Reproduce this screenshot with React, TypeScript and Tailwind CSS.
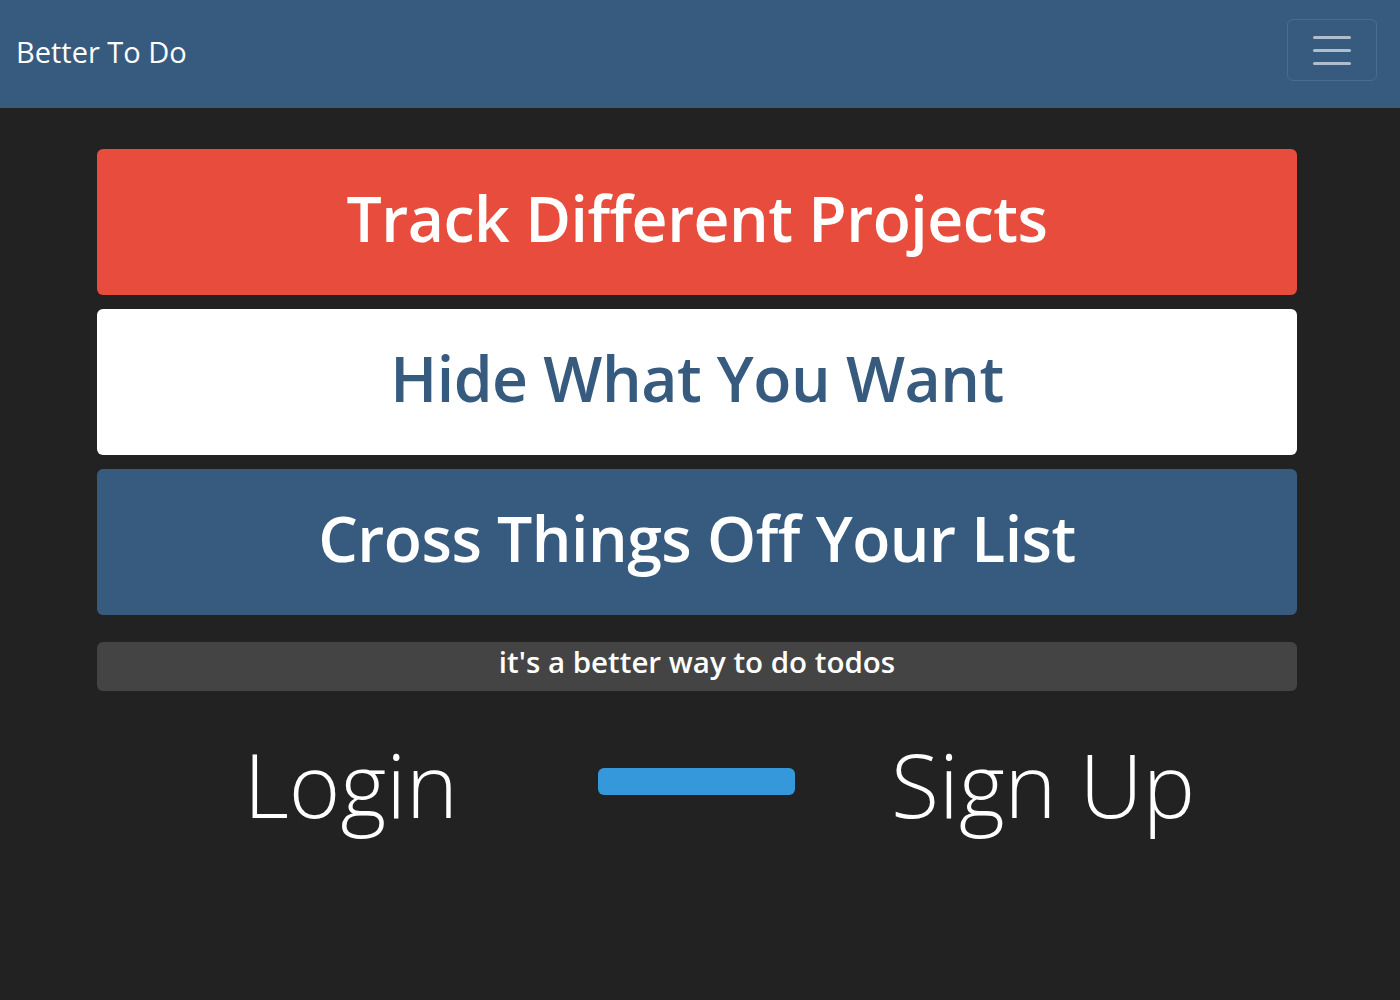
export default function App() {
  const font = { fontFamily: '"Open Sans", "Noto Sans", sans-serif' }
  return (
    <div className="min-h-screen w-full bg-[#222222]" style={font}>
      {/* Navbar */}
      <nav className="flex h-[108px] items-center justify-between bg-[#375a7f] pl-[16px] pr-[23px]">
        <span className="mb-[6px] text-[29px] leading-none text-white">Better To Do</span>
        <button className="mb-[8px] flex h-[62px] w-[90px] flex-col items-center justify-center gap-[10px] rounded-[6px] border border-white/10">
          <span className="block h-[3px] w-[38px] rounded-full bg-white/60" />
          <span className="block h-[3px] w-[38px] rounded-full bg-white/60" />
          <span className="block h-[3px] w-[38px] rounded-full bg-white/60" />
        </button>
      </nav>

      <main className="ml-[97px] flex w-[1200px] flex-col pt-[41px]">
        <div className="flex flex-col gap-[14px]">
          <div className="flex h-[146px] items-center justify-center rounded-[6px] bg-[#e74c3c] pb-[8px]">
            <h2 className="text-[62.5px] font-semibold tracking-[-0.5px] text-white">Track Different Projects</h2>
          </div>
          <div className="flex h-[146px] items-center justify-center rounded-[6px] bg-white pb-[8px]">
            <h2 className="text-[62.5px] font-semibold tracking-[-0.5px] text-[#375a7f]">Hide What You Want</h2>
          </div>
          <div className="flex h-[146px] items-center justify-center rounded-[6px] bg-[#375a7f] pb-[8px]">
            <h2 className="text-[62.5px] font-semibold tracking-[-0.5px] text-white">Cross Things Off Your List</h2>
          </div>
        </div>

        <div className="mt-[27px] flex h-[49px] items-start justify-center rounded-[6px] bg-[#444444]">
          <p className="text-[29.5px] font-semibold leading-[40px] text-white">it's a better way to do todos</p>
        </div>

        <div className="mt-[38px] flex items-center">
          <div className="flex w-[501px] justify-end pr-[140px]">
            <span className="text-[88px] font-light leading-[110px] text-white">Login</span>
          </div>
          <div className="mb-[6px] h-[27px] w-[197px] rounded-[6px] bg-[#3498db]" />
          <div className="flex w-[502px] justify-start pl-[96px]">
            <span className="text-[88px] font-light leading-[110px] text-white">Sign Up</span>
          </div>
        </div>
      </main>
    </div>
  )
}
